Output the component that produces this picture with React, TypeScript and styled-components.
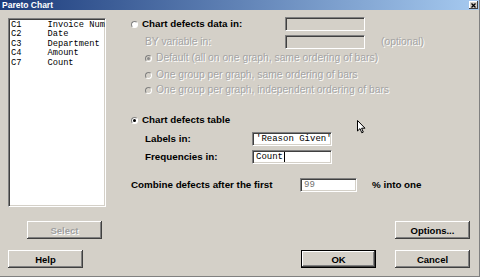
import React from 'react';
import styled, { createGlobalStyle } from 'styled-components';

const Global = createGlobalStyle`
  html, body { margin: 0; padding: 0; background: #d4d0c8; overflow: hidden; }
  body { font-family: "Liberation Sans", Arial, sans-serif; }
`;

const Dialog = styled.div`
  width: 480px;
  height: 277px;
  box-sizing: border-box;
  background: #d4d0c8;
  display: flex;
  flex-direction: column;
  position: relative;
  border-right: 1px solid #808080;
  border-bottom: 1px solid #808080;
  overflow: hidden;
`;

const TitleBar = styled.div`
  height: 10px;
  flex: none;
  display: flex;
  align-items: center;
  justify-content: space-between;
  background: linear-gradient(to right, #1c3c7c, #a6caf0);
  padding: 0 1px 0 2px;
`;

const TitleText = styled.span`
  color: #fff;
  font-weight: bold;
  font-size: 8.5px;
  line-height: 10px;
`;

const CloseBox = styled.span`
  width: 9px;
  height: 8px;
  box-sizing: border-box;
  background: #d4d0c8;
  box-shadow: inset -1px -1px #404040, inset 1px 1px #fff;
  display: flex;
  align-items: center;
  justify-content: center;
`;

const Body = styled.div`
  display: flex;
  height: 222px;
  padding: 7px 0 0 8px;
  flex: none;
`;

const LeftCol = styled.div`
  width: 98px;
  display: flex;
  flex-direction: column;
  flex: none;
`;

const ListBox = styled.div`
  margin-top: 1px;
  height: 189px;
  box-sizing: border-box;
  background: #fff;
  border: 1px solid;
  border-color: #808080 #fff #fff #808080;
  box-shadow: inset 1px 1px #404040, inset -1px -1px #d4d0c8;
  padding: 2px 0 0 2px;
  overflow: hidden;
`;

const ListItem = styled.div`
  font-family: "Liberation Mono", "Courier New", monospace;
  font-size: 8.7px;
  line-height: 9.4px;
  white-space: pre;
  color: #000;
`;

const Button = styled.div<{ $disabled?: boolean; $default?: boolean; $ml?: number }>`
  width: 75px;
  height: 18px;
  box-sizing: border-box;
  flex: none;
  margin-left: ${p => p.$ml ?? 0}px;
  background: #d4d0c8;
  display: flex;
  align-items: center;
  justify-content: center;
  font-size: 9.5px;
  font-weight: bold;
  color: ${p => (p.$disabled ? '#a0a0a0' : '#000')};
  text-shadow: ${p => (p.$disabled ? '1px 1px #fff' : 'none')};
  border: ${p => (p.$default ? '1px solid #000' : 'none')};
  box-shadow: inset -1px -1px #404040, inset 1px 1px #fff, inset -2px -2px #808080, inset 2px 2px #d4d0c8;
`;

const SelectWrap = styled.div`
  margin-top: 14px;
  padding-left: 19px;
`;

const RightCol = styled.div`
  margin-left: 25px;
  width: 339px;
  display: flex;
  flex-direction: column;
`;

const Row = styled.div<{ $mt?: number; $pl?: number }>`
  display: flex;
  align-items: center;
  height: 14px;
  margin-top: ${p => p.$mt ?? 0}px;
  padding-left: ${p => p.$pl ?? 0}px;
`;

const Label = styled.span<{ $w?: number; $bold?: boolean; $disabled?: boolean; $ml?: number }>`
  ${p => (p.$w ? `width: ${p.$w}px; flex: none;` : '')}
  margin-left: ${p => p.$ml ?? 0}px;
  font-size: ${p => (p.$bold ? '9.8px' : '10.3px')};
  font-weight: ${p => (p.$bold ? 'bold' : 'normal')};
  color: ${p => (p.$disabled ? '#a4a4a4' : '#000')};
  text-shadow: ${p => (p.$disabled ? '1px 1px #fff' : 'none')};
  white-space: nowrap;
  line-height: 14px;
`;

const Radio = styled.span<{ $checked?: boolean; $disabled?: boolean }>`
  width: 7px;
  height: 7px;
  flex: none;
  box-sizing: border-box;
  border-radius: 50%;
  margin-right: 4px;
  position: relative;
  background: ${p => (p.$disabled ? '#d4d0c8' : '#fff')};
  border: 1px solid;
  border-color: #808080 #fff #fff #808080;
  &::after {
    content: '';
    display: ${p => (p.$checked ? 'block' : 'none')};
    position: absolute;
    left: 1px;
    top: 1px;
    width: 3px;
    height: 3px;
    border-radius: 50%;
    background: ${p => (p.$disabled ? '#8a8a8a' : '#000')};
  }
`;

const TextBox = styled.div<{ $w: number; $disabled?: boolean; $dim?: boolean }>`
  width: ${p => p.$w}px;
  height: 14px;
  flex: none;
  box-sizing: border-box;
  background: ${p => (p.$disabled ? '#d4d0c8' : '#fff')};
  border: 1px solid;
  border-color: #808080 #fff #fff #808080;
  box-shadow: inset 1px 1px #404040, inset -1px -1px #d4d0c8;
  padding-left: 3px;
  display: flex;
  align-items: center;
  font-family: "Liberation Mono", "Courier New", monospace;
  font-size: 9px;
  color: ${p => (p.$dim ? '#707070' : '#000')};
  white-space: pre;
`;

const Caret = styled.span`
  width: 1px;
  height: 10px;
  background: #000;
  margin-left: 1px;
`;

const Spacer = styled.div`
  flex: 1;
`;

const OptionsRow = styled.div`
  display: flex;
  justify-content: flex-end;
`;

const Footer = styled.div`
  display: flex;
  margin-top: 11px;
  padding-left: 8px;
`;

const Cursor = styled.svg`
  position: absolute;
  left: 357px;
  top: 120px;
`;

export default function App() {
  const vars = [
    ['C1', 'Invoice Num'],
    ['C2', 'Date'],
    ['C3', 'Department'],
    ['C4', 'Amount'],
    ['C7', 'Count'],
  ];
  return (
    <>
      <Global />
      <Dialog>
        <TitleBar>
          <TitleText>Pareto Chart</TitleText>
          <CloseBox>
            <svg width="5" height="5" viewBox="0 0 5 5">
              <path d="M0.5 0.5 L4.5 4.5 M4.5 0.5 L0.5 4.5" stroke="#000" strokeWidth="1.3" />
            </svg>
          </CloseBox>
        </TitleBar>
        <Body>
          <LeftCol>
            <ListBox>
              {vars.map(([c, n]) => (
                <ListItem key={c}>{`${c}     ${n}`}</ListItem>
              ))}
            </ListBox>
            <SelectWrap>
              <Button $disabled>Select</Button>
            </SelectWrap>
          </LeftCol>
          <RightCol>
            <Row>
              <Radio />
              <Label $bold $w={143}>Chart defects data in:</Label>
              <TextBox $w={80} $disabled />
            </Row>
            <Row $mt={4} $pl={14}>
              <Label $disabled $w={140}>BY variable in:</Label>
              <TextBox $w={80} $disabled />
              <Label $disabled $ml={16}>(optional)</Label>
            </Row>
            <Row $mt={2} $pl={14}>
              <Radio $checked $disabled />
              <Label $disabled>Default (all on one graph, same ordering of bars)</Label>
            </Row>
            <Row $mt={3} $pl={14}>
              <Radio $disabled />
              <Label $disabled>One group per graph, same ordering of bars</Label>
            </Row>
            <Row $mt={1} $pl={14}>
              <Radio $disabled />
              <Label $disabled>One group per graph, independent ordering of bars</Label>
            </Row>
            <Row $mt={16}>
              <Radio $checked />
              <Label $bold>Chart defects table</Label>
            </Row>
            <Row $mt={5} $pl={14}>
              <Label $bold $w={107}>Labels in:</Label>
              <TextBox $w={80}>'Reason Given'</TextBox>
            </Row>
            <Row $mt={4} $pl={14}>
              <Label $bold $w={107}>Frequencies in:</Label>
              <TextBox $w={80}>
                Count
                <Caret />
              </TextBox>
            </Row>
            <Row $mt={14}>
              <Label $bold $w={169}>Combine defects after the first</Label>
              <TextBox $w={57} $dim>99</TextBox>
              <Label $bold $ml={15}>% into one</Label>
            </Row>
            <Spacer />
            <OptionsRow>
              <Button>Options...</Button>
            </OptionsRow>
          </RightCol>
        </Body>
        <Footer>
          <Button>Help</Button>
          <Button $default $ml={218}>OK</Button>
          <Button $ml={19}>Cancel</Button>
        </Footer>
        <Cursor width="9" height="14" viewBox="0 0 9 14">
          <path d="M0.5 0.5 L0.5 11 L3 8.6 L4.8 12.8 L6.3 12.1 L4.6 8.2 L8 8.2 Z" fill="#fff" stroke="#000" strokeWidth="1" strokeLinejoin="miter" />
        </Cursor>
      </Dialog>
    </>
  );
}
